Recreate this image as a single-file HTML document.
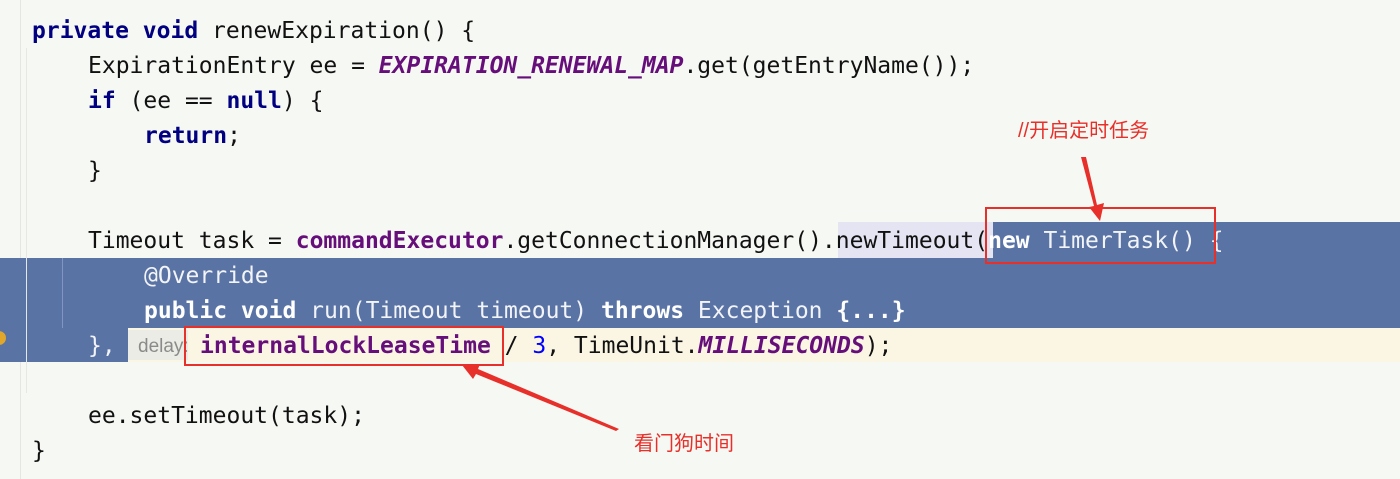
<!DOCTYPE html>
<html><head><meta charset="utf-8"><style>
body{margin:0;width:1400px;height:479px;background:#f6f8f4;position:relative;overflow:hidden;font-family:"DejaVu Sans Mono","Liberation Mono",monospace;font-size:23px;color:#111}
.l{position:absolute;white-space:pre;line-height:35px;height:35px}
.k{color:#000080;font-weight:bold}
.p{color:#660e7a;font-weight:bold}
.i{color:#660e7a;font-weight:bold;font-style:italic}
.sel{color:#f2f4f8}
.sel .k{color:#fff}
.n{color:#0000ff}
.abs{position:absolute}
.cn{font-family:"Liberation Sans","Noto Sans CJK SC",sans-serif;color:#e8302a;font-size:20px;position:absolute;white-space:nowrap}
</style></head><body>
<div class="abs" style="left:20px;top:0;width:1px;height:479px;background:#e4e6e2"></div>
<div class="abs" style="left:82px;top:328px;width:1318px;height:34px;background:#fbf6e4"></div>
<div class="abs" style="left:993px;top:222px;width:407px;height:36px;background:#5a73a5"></div>
<div class="abs" style="left:0;top:258px;width:1400px;height:70px;background:#5a73a5"></div>
<div class="abs" style="left:0;top:328px;width:128px;height:34px;background:#5a73a5"></div>
<div class="abs" style="left:838px;top:222px;width:155px;height:36px;background:#e4e4f2"></div>
<div class="abs" style="left:128px;top:330px;width:60px;height:30px;background:#ecece6"></div>
<div class="abs" style="left:62px;top:258px;width:1px;height:70px;background:#8095c0"></div>
<div class="abs" style="left:26px;top:48px;width:1px;height:345px;background:#e6e8e3"></div>
<div class="abs" style="left:-8px;top:331px;width:14px;height:14px;border-radius:50%;background:#e0a72a"></div>

<div class="l" style="left:32px;top:14px"><span class="k">private void</span> renewExpiration() {</div>
<div class="l" style="left:88px;top:49px">ExpirationEntry ee = <span class="i">EXPIRATION_RENEWAL_MAP</span>.get(getEntryName());</div>
<div class="l" style="left:88px;top:84px"><span class="k">if</span> (ee == <span class="k">null</span>) {</div>
<div class="l" style="left:144px;top:119px"><span class="k">return</span>;</div>
<div class="l" style="left:88px;top:154px">}</div>
<div class="l" style="left:88px;top:224px">Timeout task = <span class="p">commandExecutor</span>.getConnectionManager().newTimeout(<span class="sel"><span class="k">new</span> TimerTask() {</span></div>
<div class="l sel" style="left:144px;top:259px">@Override</div>
<div class="l sel" style="left:144px;top:294px"><span class="k">public void</span> run(Timeout timeout) <span class="k">throws</span> Exception <span class="k">{...}</span></div>
<div class="l" style="left:88px;top:329px"><span class="sel">},</span></div>
<div class="abs" style="left:138px;top:329px;line-height:35px;font-family:'Liberation Sans',sans-serif;font-size:19px;color:#8a8a8a">delay:</div>
<div class="l" style="left:200px;top:329px"><span class="p">internalLockLeaseTime</span> / <span class="n">3</span>, TimeUnit.<span class="i">MILLISECONDS</span>);</div>
<div class="l" style="left:88px;top:399px">ee.setTimeout(task);</div>
<div class="l" style="left:32px;top:434px">}</div>

<div class="abs" style="left:985px;top:207px;width:227px;height:53px;border:2px solid #e8302a"></div>
<div class="abs" style="left:184px;top:326px;width:316px;height:36px;border:2px solid #e8302a"></div>
<svg class="abs" style="left:0;top:0" width="1400" height="479">
<polygon points="1081,157 1086,157 1097,205 1104,203 1100,221 1089,207 1094,206" fill="#e8302a"/>
<polygon points="619,429 616,431 476,374 473,379 462,365 480,364 478,369" fill="#e8302a"/>
</svg>
<div class="cn" style="left:1018px;top:114px">//开启定时任务</div>
<div class="cn" style="left:634px;top:427px">看门狗时间</div>
</body></html>
